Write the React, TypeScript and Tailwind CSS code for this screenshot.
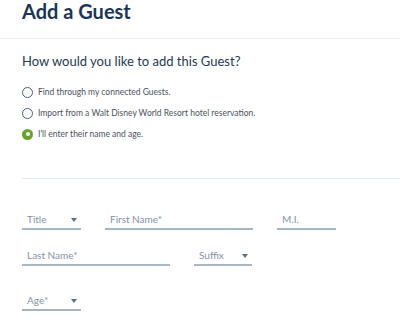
import { useState } from "react";

const OPTIONS = [
  "Find through my connected Guests.",
  "Import from a Walt Disney World Resort hotel reservation.",
  "I'll enter their name and age.",
];

function Field({ label, width, select }: { label: string; width: string; select?: boolean }) {
  return (
    <div className={`flex h-[20px] items-center justify-between border-b-2 border-[#aab5c4] pl-[5px] pr-[4px] ${width}`}>
      <span className="text-[10px] text-[#8391a6]">{label}</span>
      {select && (
        <svg width="6" height="4" viewBox="0 0 6 4" className="mt-[2px]">
          <path d="M0 0h6L3 4z" fill="#5d6e87" />
        </svg>
      )}
    </div>
  );
}

export default function App() {
  const [choice, setChoice] = useState(2);

  return (
    <main className="h-[318px] w-[400px] overflow-hidden bg-white font-['Lato',sans-serif]">
      <header className="h-[39px] border-b border-[#f1f2f3] pl-[22px]">
        <h1 className="text-[20px] font-bold leading-[22px] text-[#1c3557]">Add a Guest</h1>
      </header>

      <section className="pl-[22px] pt-[14px]">
        <h2 className="text-[13px] leading-[16px] text-[#253a52]">How would you like to add this Guest?</h2>
        <div className="mt-[16px] flex flex-col gap-[7px]">
          {OPTIONS.map((o, i) => (
            <button
              key={o}
              type="button"
              onClick={() => setChoice(i)}
              className="flex h-[14px] items-center gap-[5px] text-left"
            >
              {choice === i ? (
                <span className="flex h-[11px] w-[11px] items-center justify-center rounded-full bg-[#68a32b]">
                  <span className="h-[4px] w-[4px] rounded-full bg-white" />
                </span>
              ) : (
                <span className="h-[11px] w-[11px] rounded-full border-[1.5px] border-[#4d5d73]" />
              )}
              <span className="text-[8.5px] text-[#4a5260]">{o}</span>
            </button>
          ))}
        </div>
      </section>

      <div className="ml-[22px] mt-[37px] border-t border-[#dde8ef]" />

      <section className="pl-[22px] pt-[31px]">
        <div className="flex gap-[24px]">
          <Field label="Title" width="w-[59px]" select />
          <Field label="First Name*" width="w-[148px]" />
          <Field label="M.I." width="w-[59px]" />
        </div>
        <div className="mt-[16px] flex gap-[24px]">
          <Field label="Last Name*" width="w-[148px]" />
          <Field label="Suffix" width="w-[58px]" select />
        </div>
        <div className="mt-[25px] flex">
          <Field label="Age*" width="w-[59px]" select />
        </div>
      </section>
    </main>
  );
}
